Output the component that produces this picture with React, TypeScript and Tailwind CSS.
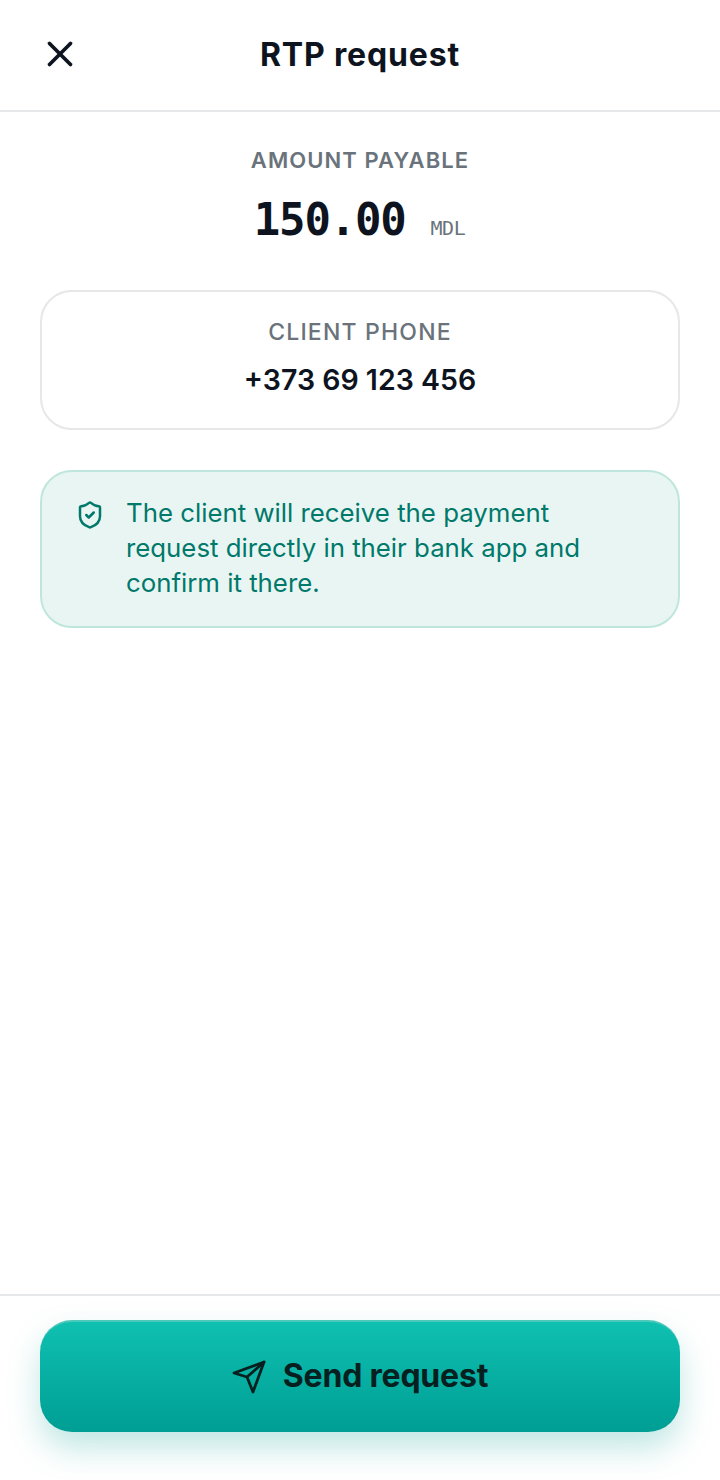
import { ShieldCheck, X } from "lucide-react";

export default function App() {
  return (
    <div className="flex h-[1480px] w-[720px] flex-col bg-white font-['Inter',sans-serif] text-[#0d1420]">
      <header className="flex h-[112px] items-center border-b-2 border-[#e5e7e8] pl-[39px] pr-[40px]">
        <X size={42} strokeWidth={2.1} className="mb-[2px] text-[#0d1420]" />
        <h1 className="flex-1 pr-[41px] text-center text-[32px] font-bold tracking-[0.85px]">RTP request</h1>
      </header>
      <main className="flex flex-1 flex-col px-[40px]">
        <div className="mt-[34px] text-center text-[22px] leading-[28px] font-semibold tracking-[1.08px] text-[#6a737b]">AMOUNT PAYABLE</div>
        <div className="mt-[18px] flex items-baseline justify-center gap-[25px] pr-[1px] font-['DejaVu_Sans_Mono',monospace]">
          <span className="text-[44px] leading-[56px] font-bold tracking-[-1.2px]">150.00</span>
          <span className="text-[20px] font-normal tracking-[-0.5px] text-[#6a737b]">MDL</span>
        </div>
        <section className="mt-[42px] flex h-[140px] flex-col items-center rounded-[32px] border-2 border-[#e5e7e8] pt-[26px]">
          <div className="text-[23px] leading-[28px] font-medium tracking-[1.2px] text-[#6a737b]">CLIENT PHONE</div>
          <div className="mt-[19px] text-[28.5px] leading-[30px] font-semibold">+373 69 123 456</div>
        </section>
        <section className="mt-[40px] flex h-[158px] gap-[21px] rounded-[32px] border-2 border-[#bfe6dc] bg-[#e9f5f2] pl-[33px] pr-[40px] pt-[24px]">
          <ShieldCheck size={30} strokeWidth={2} className="mt-[4px] shrink-0 text-[#00796b]" />
          <p className="text-[25.8px] leading-[34.8px] text-[#00796b]">The client will receive the payment request directly in their bank app and confirm it there.</p>
        </section>
      </main>
      <footer className="h-[186px] border-t-2 border-[#e5e7e8] px-[40px] pt-[24px]">
        <button className="flex h-[112px] w-full items-center justify-center gap-[17px] rounded-[32px] border-t-2 border-[#4cc9bb] bg-gradient-to-b from-[#0fc0b0] to-[#009e94] pb-[3px] text-[32px] font-bold tracking-[-0.2px] text-[#06201f] shadow-[0_16px_32px_rgba(0,158,148,0.25)]">
          <svg width="34" height="34" viewBox="0 0 34 34" fill="none" stroke="currentColor" strokeWidth="2.8" strokeLinecap="round" strokeLinejoin="round" className="mt-[2px]">
            <path d="M32 2 L2 13 L15 17 L21 32 Z" />
            <path d="M15 17 L32 2" />
          </svg>
          Send request
        </button>
      </footer>
    </div>
  );
}
